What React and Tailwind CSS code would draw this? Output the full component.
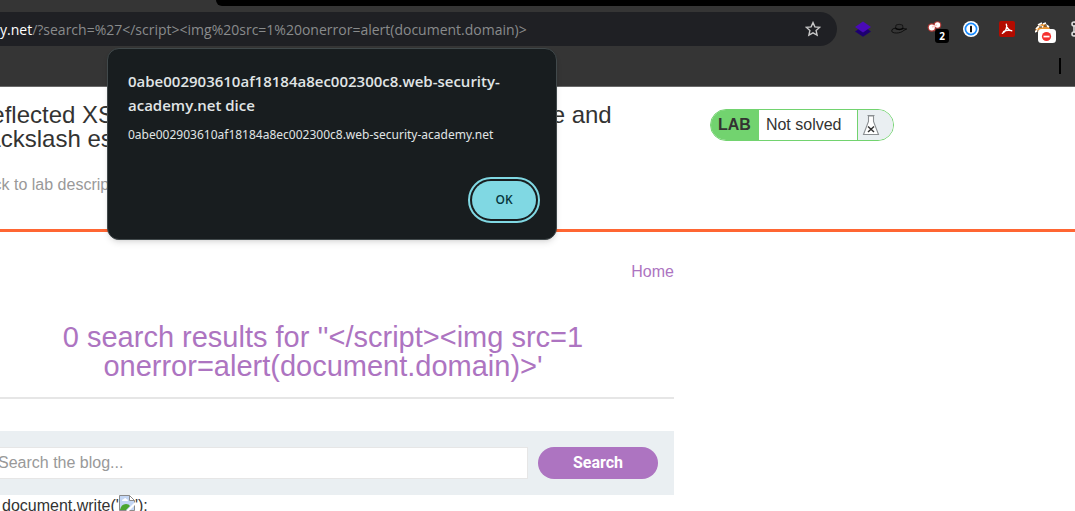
import React from 'react';

const ui = "font-['Open_Sans','Noto_Sans',sans-serif]";

function LayersIcon() {
  return (
    <svg viewBox="0 0 16 16" className="h-4 w-4" aria-hidden="true">
      <path d="M0 10.500 8 5l8 5.500-8 5.300z" fill="#1d0070" />
      <path d="M0 6 8 .5 16 6l-8 5.500z" fill="#4a0ab8" />
    </svg>
  );
}

function HatIcon() {
  return (
    <svg viewBox="0 0 16 16" className="h-4 w-4" aria-hidden="true">
      <path d="M4.500 7.800 5 4Q8 2.600 11.500 4l.7 3.800Q8.500 10 4.500 7.800z" fill="#333" stroke="#0a0a0a" strokeWidth=".7" />
      <path d="M4.500 6.500Q8.500 9 12 6.500V8Q8.500 10 4.500 8z" fill="#050505" />
      <path d="M4.500 7Q.5 7.600.6 10c.2 2.400 8.400 3.200 12.400-.7L15.700 8 12 7.600" fill="none" stroke="#0a0a0a" strokeWidth=".9" />
    </svg>
  );
}

function NodesIcon() {
  return (
    <svg viewBox="0 0 24 22" className="h-[22px] w-6" aria-hidden="true">
      <g fill="#e23b35" opacity=".7">
        <circle cx="4.800" cy="6.500" r="4.200" />
        <circle cx="10.500" cy="4" r="3.800" />
      </g>
      <path d="m7 8 3 5" stroke="#c9413c" strokeWidth="1.200" />
      <circle cx="4.800" cy="6.500" r="3" fill="#fff" />
      <circle cx="10.500" cy="4" r="2.700" fill="#fff" />
      <path d="m5 6 5-2" stroke="#ffc9c6" strokeWidth="1.500" />
      <rect x="8" y="8" width="14" height="14" rx="3" fill="#000" />
      <text x="15" y="19" textAnchor="middle" fontSize="10" fontWeight="700" fill="#fff" fontFamily="Open Sans">2</text>
    </svg>
  );
}

function KeyholeIcon() {
  return (
    <svg viewBox="0 0 16 16" className="h-4 w-4" aria-hidden="true">
      <circle cx="8" cy="8" r="8" fill="#fff" />
      <circle cx="8" cy="8" r="5.600" fill="#fff" stroke="#1a8cff" strokeWidth="1.700" />
      <rect x="7" y="4.700" width="2" height="6.600" rx=".6" fill="#111" />
    </svg>
  );
}

function PdfIcon() {
  return (
    <svg viewBox="0 0 16 16" className="h-4 w-4" aria-hidden="true">
      <rect width="16" height="16" rx="2" fill="#b30b00" />
      <path d="M7.300 3.300c.2 3.200 2 5.700 5.400 6.600M7.700 4.500C7.700 8 6 11 3.300 12.300M4.500 10.600c2-1.200 5-1.700 8.200-1" fill="none" stroke="#fff" strokeWidth="1.400" strokeLinecap="round" />
    </svg>
  );
}

function BlockedIcon() {
  return (
    <svg viewBox="0 0 22 22" className="h-[22px] w-[22px]" aria-hidden="true">
      <path d="M0 10q1-7 7-8 6-.5 8 5v3z" fill="#e8912e" />
      <path d="M1 7q3-4 7-2M3 3l4-2m1 1 3-1m0 2 3 2M0 10l3-2" stroke="#fff" strokeWidth="1.700" fill="none" />
      <path d="M4 5h3m2-1h3M6 8h5M2 9h3" stroke="#352414" strokeWidth="1.100" />
      <rect x="3" y="7" width="18" height="14" rx="3.500" fill="#fff" />
      <circle cx="11.500" cy="14.500" r="4.600" fill="#f5302f" />
      <rect x="8.500" y="13.700" width="6" height="1.700" fill="#fff" />
    </svg>
  );
}

function PuzzleIcon() {
  return (
    <svg viewBox="0 0 16 16" className="h-4 w-4" aria-hidden="true">
      <g fill="none" stroke="#ddd" strokeWidth="1.600">
        <circle cx="3" cy="3" r="2" />
        <circle cx="3" cy="13" r="2" />
        <path d="M3 5v6M5 3h6M5 13h6" />
      </g>
    </svg>
  );
}

function FlaskIcon() {
  return (
    <svg viewBox="0 0 18 22" className="h-[22px] w-[18px]" aria-hidden="true">
      <path d="M5.500 1.500h7M6.500 2v5.500L1.500 20.500h15L11.500 7.500V2z" fill="#fff" stroke="#8b8f92" strokeWidth="1.100" />
      <path d="m6 12.500 6 5.500m0-5.500L6 18" stroke="#333" strokeWidth="1.500" />
    </svg>
  );
}

function BrokenImage() {
  return (
    <svg viewBox="0 0 16 16" className="inline-block h-4 w-4 align-baseline" role="img" aria-label="broken">
      <path d="M.5.500h10l5 5v10H.5z" fill="#c3d6f4" stroke="#8b8b8b" />
      <path d="M3 6q0-2 2-2 1-2 2.500 0Q9 4 9 6z" fill="#fff" />
      <path d="M1 15q1-6 6-6 3 0 4 2l-4 4z" fill="#4aa62f" />
      <path d="M10.500.500v5h5z" fill="#fff" stroke="#8b8b8b" />
      <path d="M16 7 7 16h3l6-6z" fill="#fff" />
    </svg>
  );
}

function Browser() {
  return (
    <header className="bg-[#353535] border-b border-[#696969]">
      <div className="ml-[216px] h-1.5 rounded-bl-lg bg-black" />
      <div className="mt-1.5 flex h-[34px] items-center">
        <div className={`flex h-full min-w-0 flex-1 items-center rounded-r-full bg-[#1f2024] pr-4 text-[14px] ${ui}`}>
          <div className="min-w-0 flex-1 truncate text-[#898b8c]">
            <span className="text-white">y.net</span>/?search=%27&lt;/script&gt;&lt;img%20src=1%20onerror=alert(document.domain)&gt;
          </div>
          <button aria-label="Bookmark">
            <svg viewBox="0 0 16 16" className="h-4 w-4" aria-hidden="true">
              <path d="m8 1.600 1.900 4.300 4.700.5-3.500 3.100 1 4.700L8 11.800l-4.100 2.400 1-4.700L1.400 6.400l4.700-.5z" fill="none" stroke="#c7c7c7" strokeWidth="1.400" />
            </svg>
          </button>
        </div>
        <div className="flex w-[238px] shrink-0 items-center overflow-hidden pl-[18px]">
          <button className="w-9 shrink-0" aria-label="Layers"><LayersIcon /></button>
          <button className="w-9 shrink-0" aria-label="Hat"><HatIcon /></button>
          <button className="w-9 shrink-0 pt-1.5" aria-label="Nodes, 2"><NodesIcon /></button>
          <button className="w-9 shrink-0" aria-label="Passwords"><KeyholeIcon /></button>
          <button className="w-9 shrink-0" aria-label="PDF"><PdfIcon /></button>
          <button className="w-9 shrink-0 pt-2" aria-label="Blocked"><BlockedIcon /></button>
          <button className="w-9 shrink-0" aria-label="Extensions"><PuzzleIcon /></button>
        </div>
      </div>
      <div className="flex h-10 items-center justify-end pr-3.5">
        <div className="h-4 w-0.5 bg-black" />
      </div>
    </header>
  );
}

function AlertDialog() {
  return (
    <div
      role="alertdialog"
      aria-labelledby="alert-title"
      aria-describedby="alert-text"
      className={`absolute left-[107px] top-12 w-[450px] rounded-xl border border-[#41494b] bg-[#181d1f] px-5 py-5 text-[#e0e5e6] shadow-md ${ui}`}
    >
      <h2 id="alert-title" className="text-[15px] font-semibold leading-6">
        0abe002903610af18184a8ec002300c8.web-security-academy.net dice
      </h2>
      <p id="alert-text" className="mt-2 font-['Noto_Sans',sans-serif] text-[12px] leading-5">
        0abe002903610af18184a8ec002300c8.web-security-academy.net
      </p>
      <div className="mt-9 flex justify-end">
        <button className="h-[38px] w-16 rounded-full bg-[#80d8e3] text-[12px] font-semibold text-[#06363d] outline-2 outline-offset-2 outline-[#80d8e3]">
          OK
        </button>
      </div>
    </div>
  );
}

export default function App() {
  return (
    <div className="relative h-screen overflow-hidden bg-white font-['Liberation_Sans',Arial,sans-serif] text-base text-[#333332]">
      <Browser />
      <section className="-ml-[26px] flex items-start border-b-3 border-[#ff6633] pb-8 pt-4">
        <div className="w-[736px] shrink-0">
          <h2 className="text-2xl leading-6">
            Reflected XSS into a JavaScript string with single quote and<br />backslash escaped
          </h2>
          <a href="#lab" className="mt-[22px] block leading-6 text-[#999]">Back to lab description »</a>
        </div>
        <div className="mt-1.5 flex h-8 items-stretch overflow-hidden rounded-full border border-[#72d36f] leading-[30px]">
          <span className="bg-[#72d36f] px-[7px] pr-2 font-bold">LAB</span>
          <span className="w-[98px] px-[7px]">Not solved</span>
          <span className="flex w-9 items-center border-l border-[#72d36f] bg-[#eaeff2] pl-1"><FlaskIcon /></span>
        </div>
      </section>
      <main className="-ml-7 max-w-[702px]">
        <nav className="pt-7 text-right leading-6">
          <a href="#home" className="text-[#ad74c1]">Home</a>
        </nav>
        <h1 className="mt-[39px] border-b-2 border-[#e6e6e6] pb-4 text-center text-[29px] leading-[29px] text-[#ad74c1]">
          0 search results for ''&lt;/script&gt;&lt;img src=1 onerror=alert(document.domain)&gt;'
        </h1>
        <form className="mt-8 flex gap-2.5 bg-[#eaeff2] p-4" onSubmit={(e) => e.preventDefault()}>
          <input
            type="text"
            aria-label="Search the blog"
            placeholder="Search the blog..."
            className="h-8 min-w-0 flex-1 border border-[#e6e6e6] bg-white px-[9px] placeholder:text-[#999]"
          />
          <button className="h-8 w-[120px] rounded-full bg-[#ad74c1] font-['Roboto',sans-serif] font-bold text-white">Search</button>
        </form>
        <p className="pl-[30px] leading-5">document.write('<BrokenImage />');</p>
      </main>
      <AlertDialog />
    </div>
  );
}
